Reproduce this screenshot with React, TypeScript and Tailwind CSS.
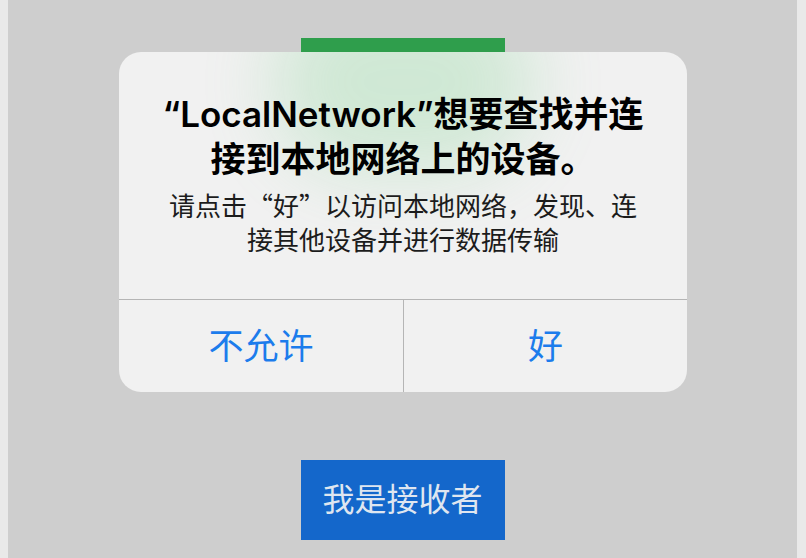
const font = '"Inter", "Noto Sans CJK SC", sans-serif';
const cjk = '"Noto Sans CJK SC", sans-serif';

function Q({ children }: { children: string }) {
  return <span style={{ fontFamily: cjk }}>{children}</span>;
}

export default function App() {
  return (
    <div className="flex h-[558px] w-[806px] bg-[#e9e9e9]" style={{ fontFamily: font }}>
      <div className="relative mx-[9px] ml-[8px] flex flex-1 flex-col items-center bg-[#cecece]">
        <div className="mt-[38px] h-[80px] w-[204px] bg-[#2f9e4c]" />
        <button
          type="button"
          className="mt-[342px] flex h-[80px] w-[204px] items-center justify-center bg-[#1467cb] text-[32px] text-[#dfe6f0]"
        >
          我是接收者
        </button>

        <div className="absolute left-[111px] top-[52px] w-[568px] overflow-hidden rounded-[22px] bg-[#f1f1f1]">
          {/* green button showing through the frosted dialog */}
          <div className="absolute left-[154px] top-[-60px] h-[180px] w-[260px] rounded-full bg-[#6fd083] opacity-25 blur-[36px]" />
          <div className="relative px-4 pb-[41px] pt-[40px] text-center">
            <div className="text-[35px] font-semibold leading-[45px] text-black">
              “LocalNetwork”想要查找并连
              <br />
              接到本地网络上的设备。
            </div>
            <div className="mt-[6px] text-[26px] leading-[34px] text-[#1c1c1c]">
              请点击<Q>“</Q>好<Q>”</Q>以访问本地网络，发现、连
              <br />
              接其他设备并进行数据传输
            </div>
          </div>
          <div className="relative grid h-[93px] grid-cols-2 border-t border-[#b5b5b5]">
            <button type="button" className="text-[35px] text-[#1c7cec]">
              不允许
            </button>
            <button type="button" className="border-l border-[#b5b5b5] text-[35px] text-[#1c7cec]">
              好
            </button>
          </div>
        </div>
      </div>
    </div>
  );
}
